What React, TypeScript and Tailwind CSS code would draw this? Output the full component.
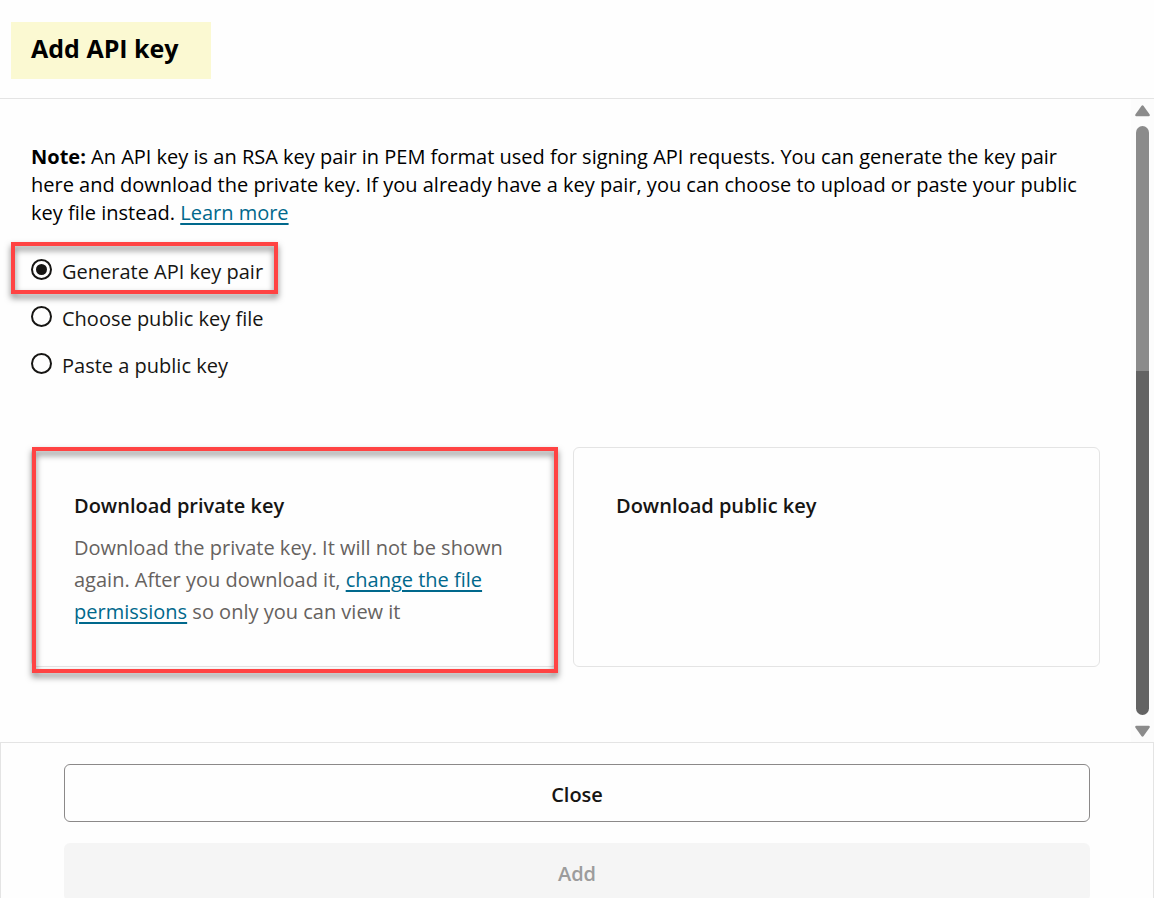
import { useState } from "react";

const options = [
  { id: "generate", label: "Generate API key pair", highlighted: true },
  { id: "choose", label: "Choose public key file", highlighted: false },
  { id: "paste", label: "Paste a public key", highlighted: false },
];

function Highlight({ className }: { className: string }) {
  return (
    <span
      aria-hidden="true"
      className={`pointer-events-none absolute border-4 border-[#ff4343] drop-shadow-[0_4px_3px_rgba(0,0,0,0.5)] ${className}`}
    />
  );
}

function KeyTypeOptions() {
  const [selected, setSelected] = useState("generate");
  return (
    <fieldset className="mt-[30px] flex flex-col items-start gap-[17px]">
      {options.map((option) => (
        <label key={option.id} htmlFor={option.id} className="relative flex items-start gap-[10px] text-[#161513]">
          <input
            id={option.id}
            type="radio"
            name="key-type"
            checked={selected === option.id}
            onChange={() => setSelected(option.id)}
            className="mt-[2px] grid size-[21px] shrink-0 appearance-none place-items-center rounded-full border-2 border-[#161513] before:hidden before:size-[11px] before:rounded-full before:bg-[#161513] checked:before:block"
          />
          <span className="leading-[30px]">{option.label}</span>
          {option.highlighted && <Highlight className="-top-[15px] -right-[15px] -bottom-[7px] -left-5" />}
        </label>
      ))}
    </fieldset>
  );
}

function ScrollTrack() {
  return (
    <div aria-hidden="true" className="flex w-[23px] shrink-0 flex-col items-center bg-[#fcfcfc] pt-[6px] pb-[5px]">
      <svg width="15" height="12" viewBox="0 0 15 12" fill="#8b8b8b" className="shrink-0">
        <path d="M6.4 1.1Q7.5-.4 8.6 1.1L14.5 9.2Q15.4 11 13.6 11.2H1.4Q-.4 11 .5 9.2Z" />
      </svg>
      <div className="mt-[9px] mb-[10px] flex w-[13px] flex-1 flex-col overflow-hidden rounded-full">
        <div className="grow-[245] bg-[#8b8b8b]" />
        <div className="grow-[344] bg-[#636363]" />
      </div>
      <svg width="15" height="12" viewBox="0 0 15 12" fill="#8b8b8b" className="shrink-0">
        <path d="M6.4 10.9Q7.5 12.4 8.6 10.9L14.5 2.8Q15.4 1 13.6.8H1.4Q-.4 1 .5 2.8Z" />
      </svg>
    </div>
  );
}

export default function App() {
  return (
    <div className="flex h-screen flex-col overflow-hidden bg-[#fefefe] font-['Open_Sans','Noto_Sans',sans-serif] text-[20px] leading-7 text-black">
      <header className="flex shrink-0 border-b border-[#e4e4e4] px-[11px] pt-[22px] pb-[19px]">
        <h1 className="bg-[#fbf9d2] pt-[11px] pr-8 pb-[15px] pl-5 text-[25px] leading-[31px] font-bold">
          Add API key
        </h1>
      </header>

      <div className="flex shrink-0">
        <main className="flex-1 pt-11 pr-[31px] pb-[75px] pl-[31px]">
          <p>
            <strong className="font-bold">Note:</strong> An API key is an RSA key pair in PEM format used for signing API
            requests. You can generate the key pair here and download the private key. If you already have a key pair, you
            can choose to upload or paste your public key file instead.{" "}
            <a href="#learn-more" className="text-[#00688c] underline decoration-2 underline-offset-3">
              Learn more
            </a>
          </p>

          <KeyTypeOptions />

          <div className="mt-[66px] grid grid-cols-2 gap-[15px]">
            <section className="relative rounded-md border border-[#e4e4e4] px-[42px] pt-11 pb-[38px]">
              <h2 className="font-semibold text-[#161513]">Download private key</h2>
              <p className="mt-3 leading-8 text-[#66625f]">
                Download the private key. It will not be shown again. After you download it,{" "}
                <a href="#permissions" className="text-[#00688c] underline decoration-2 underline-offset-3">
                  change the file permissions
                </a>{" "}
                so only you can view it
              </p>
              <Highlight className="-top-px -right-px -bottom-[7px] left-0" />
            </section>
            <section className="rounded-md border border-[#e4e4e4] px-[42px] pt-11 pb-[38px]">
              <h2 className="font-semibold text-[#161513]">Download public key</h2>
            </section>
          </div>
        </main>
        <ScrollTrack />
      </div>

      <footer className="flex shrink-0 flex-col gap-[21px] border border-[#e4e4e4] px-[63px] py-[21px] font-semibold">
        <button type="button" className="h-[58px] rounded-md border border-[#8b8989] pt-[3px] text-[#161513]">
          Close
        </button>
        <button type="button" disabled className="h-[58px] rounded-md bg-[#f5f5f5] pt-[3px] text-[#9c9c9c]">
          Add
        </button>
      </footer>
    </div>
  );
}
